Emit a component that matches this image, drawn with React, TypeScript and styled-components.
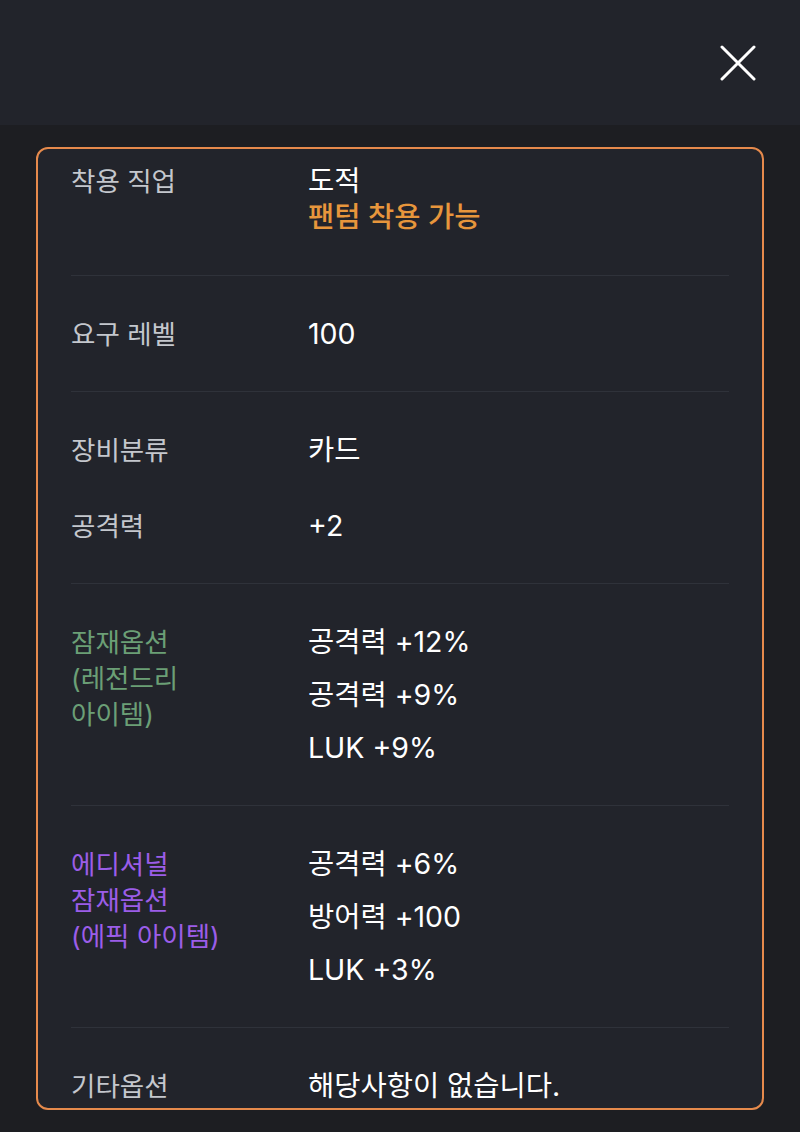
import React from 'react';
import styled, { createGlobalStyle } from 'styled-components';

const GlobalStyle = createGlobalStyle`
  html, body {
    margin: 0;
    padding: 0;
    background: #1d1e22;
  }
  body {
    font-family: "Inter", "Noto Sans CJK KR", sans-serif;
    -webkit-font-smoothing: antialiased;
  }
`;

const Page = styled.div`
  width: 800px;
  height: 1132px;
  background: #1d1e22;
  display: flex;
  flex-direction: column;
  overflow: hidden;
`;

const Header = styled.header`
  height: 125px;
  flex-shrink: 0;
  background: #22242b;
  display: flex;
  align-items: center;
  justify-content: flex-end;
  padding-right: 44px;
`;

const CloseButton = styled.button`
  width: 36px;
  height: 36px;
  padding: 0;
  border: none;
  background: transparent;
  cursor: pointer;
  display: flex;
  align-items: center;
  justify-content: center;
`;

const Body = styled.main`
  padding: 22px 36px 0;
`;

const Card = styled.section`
  height: 963px;
  box-sizing: border-box;
  border: 2px solid #e68a4c;
  border-radius: 12px;
  background: #22242b;
  padding: 0 33px;
  overflow: hidden;
`;

const Section = styled.div<{ $first?: boolean }>`
  display: flex;
  flex-direction: column;
  gap: 40px;
  padding: ${p => (p.$first ? '14px 0 40px' : '40px 0 39px')};
  border-bottom: 1px solid #2f323a;

  &:last-child {
    border-bottom: none;
  }
`;

const Row = styled.div`
  display: grid;
  grid-template-columns: 237px 1fr;
  align-items: start;
`;

const Label = styled.div<{ $tone?: 'green' | 'purple' }>`
  font-size: 26.5px;
  line-height: 36px;
  color: ${p =>
    p.$tone === 'green' ? '#6b9f76' : p.$tone === 'purple' ? '#9b5de8' : '#c4c7cd'};
`;

const Values = styled.div<{ $spaced?: boolean }>`
  display: flex;
  flex-direction: column;
  gap: ${p => (p.$spaced ? '17px' : '0')};
`;

const Value = styled.div<{ $accent?: boolean }>`
  font-size: 28.5px;
  line-height: 36px;
  font-weight: ${p => (p.$accent ? 500 : 400)};
  color: ${p => (p.$accent ? '#e7963c' : '#ffffff')};
  white-space: nowrap;
`;

const CloseIcon = () => (
  <svg width="36" height="36" viewBox="0 0 36 36" fill="none">
    <path d="M2 2L34 34M34 2L2 34" stroke="#ffffff" strokeWidth="3" strokeLinecap="round" />
  </svg>
);

export default function App() {
  return (
    <>
      <GlobalStyle />
      <Page>
        <Header>
          <CloseButton aria-label="닫기">
            <CloseIcon />
          </CloseButton>
        </Header>
        <Body>
          <Card>
            <Section $first>
              <Row>
                <Label>착용 직업</Label>
                <Values>
                  <Value>도적</Value>
                  <Value $accent>팬텀 착용 가능</Value>
                </Values>
              </Row>
            </Section>
            <Section>
              <Row>
                <Label>요구 레벨</Label>
                <Values>
                  <Value>100</Value>
                </Values>
              </Row>
            </Section>
            <Section>
              <Row>
                <Label>장비분류</Label>
                <Values>
                  <Value>카드</Value>
                </Values>
              </Row>
              <Row>
                <Label>공격력</Label>
                <Values>
                  <Value>+2</Value>
                </Values>
              </Row>
            </Section>
            <Section>
              <Row>
                <Label $tone="green">
                  잠재옵션
                  <br />
                  (레전드리
                  <br />
                  아이템)
                </Label>
                <Values $spaced>
                  <Value>공격력 +12%</Value>
                  <Value>공격력 +9%</Value>
                  <Value>LUK +9%</Value>
                </Values>
              </Row>
            </Section>
            <Section>
              <Row>
                <Label $tone="purple">
                  에디셔널
                  <br />
                  잠재옵션
                  <br />
                  (에픽 아이템)
                </Label>
                <Values $spaced>
                  <Value>공격력 +6%</Value>
                  <Value>방어력 +100</Value>
                  <Value>LUK +3%</Value>
                </Values>
              </Row>
            </Section>
            <Section>
              <Row>
                <Label>기타옵션</Label>
                <Values>
                  <Value>해당사항이 없습니다.</Value>
                </Values>
              </Row>
            </Section>
          </Card>
        </Body>
      </Page>
    </>
  );
}
